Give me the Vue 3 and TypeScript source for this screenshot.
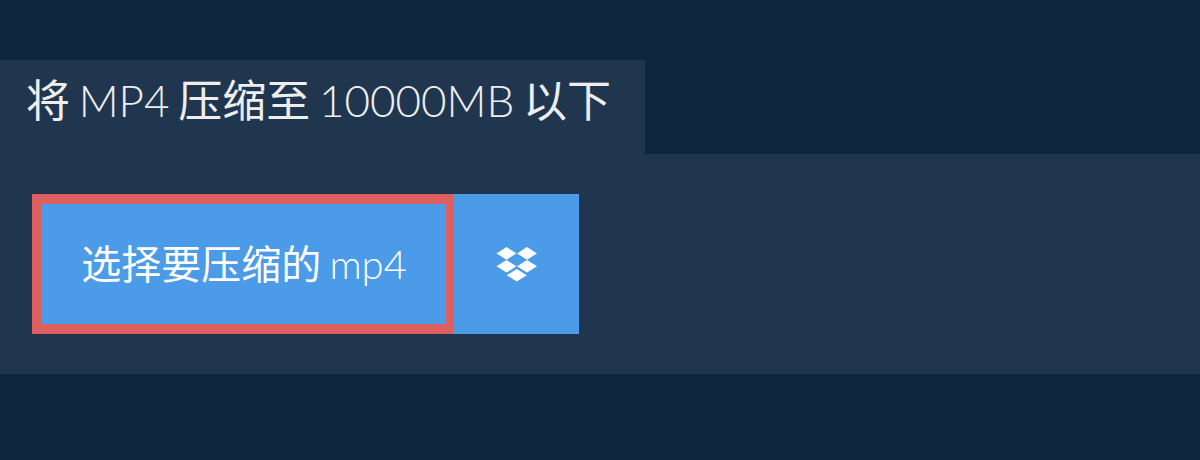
<script setup lang="ts">
const title = "10000MB";
const diamonds = [
  { cx: 10.5, cy: 6.4 },
  { cx: 31, cy: 6.4 },
  { cx: 10.5, cy: 19.3 },
  { cx: 31, cy: 19.3 },
  { cx: 20.8, cy: 28.2 },
];
const diamondPoints = (cx: number, cy: number): string =>
  `${cx - 10},${cy} ${cx},${cy - 6.3} ${cx + 10},${cy} ${cx},${cy + 6.3}`;
</script>

<template>
  <div class="page">
    <div class="tab">
      <h1 class="heading">将 <span class="latin">MP4</span> 压缩至 <span class="latin">{{ title }}</span> 以下</h1>
    </div>
    <div class="panel">
      <div class="actions">
        <button class="choose">选择要压缩的 <span class="latin">mp4</span></button>
        <button class="dropbox" aria-label="Dropbox">
          <svg viewBox="0 0 42 35" width="42" height="35" fill="#fff">
            <polygon v-for="d in diamonds" :key="`${d.cx}-${d.cy}`" :points="diamondPoints(d.cx, d.cy)" />
          </svg>
        </button>
      </div>
    </div>
  </div>
</template>

<style>
html, body { margin: 0; background: #0e263c; }
</style>

<style scoped>
.page {
  width: 1200px;
  height: 460px;
  padding-top: 60px;
  box-sizing: border-box;
  background: #0e263c;
  font-family: Lato, "Noto Sans CJK SC", sans-serif;
  display: flex;
  flex-direction: column;
}
.tab {
  height: 94px;
  width: 645px;
  box-sizing: border-box;
  padding: 15px 26px 0;
  background: #20364f;
}
.heading {
  margin: 0;
  font-size: 44px;
  line-height: 50px;
  font-weight: 400;
  word-spacing: -2.6px;
  color: #eeeeee;
  white-space: nowrap;
}
.latin { font-weight: 300; }
.panel {
  height: 220px;
  padding: 40px 32px;
  box-sizing: border-box;
  background: #20364f;
}
.actions { display: flex; }
.choose, .dropbox {
  height: 140px;
  border: 0;
  background: #4c9be8;
  color: #fff;
  font-family: inherit;
  padding: 0;
}
.choose {
  width: 422px;
  box-sizing: border-box;
  border: 10px solid #de605e;
  border-right-width: 8px;
  padding-bottom: 4px;
  font-size: 40px;
  font-weight: 400;
  word-spacing: -2px;
}
.dropbox {
  width: 125px;
  display: flex;
  align-items: center;
  justify-content: center;
}
</style>
